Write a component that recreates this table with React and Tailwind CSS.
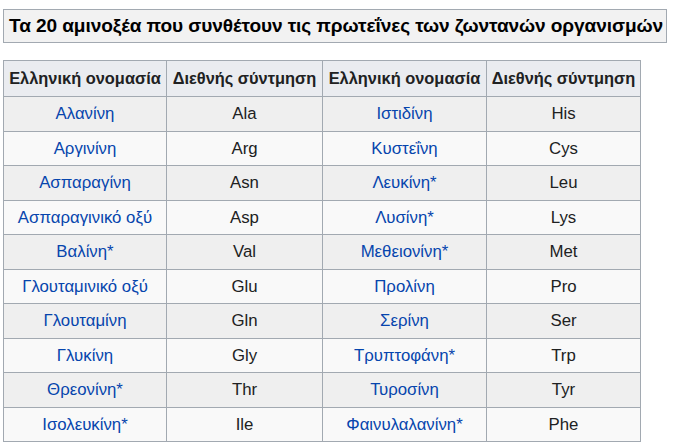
const rows = [
  ["Αλανίνη", "Ala", "Ιστιδίνη", "His"],
  ["Αργινίνη", "Arg", "Κυστεΐνη", "Cys"],
  ["Ασπαραγίνη", "Asn", "Λευκίνη*", "Leu"],
  ["Ασπαραγινικό οξύ", "Asp", "Λυσίνη*", "Lys"],
  ["Βαλίνη*", "Val", "Μεθειονίνη*", "Met"],
  ["Γλουταμινικό οξύ", "Glu", "Προλίνη", "Pro"],
  ["Γλουταμίνη", "Gln", "Σερίνη", "Ser"],
  ["Γλυκίνη", "Gly", "Τρυπτοφάνη*", "Trp"],
  ["Θρεονίνη*", "Thr", "Τυροσίνη", "Tyr"],
  ["Ισολευκίνη*", "Ile", "Φαινυλαλανίνη*", "Phe"],
];

function App() {
  return (
    <div className="bg-white w-[675px] h-[446px] px-[3px] pt-[9px] font-['Liberation_Sans',Arial,sans-serif] text-[#202122]">
      <div className="w-[664px] h-[34px] border border-[#a2a9b1] bg-[#f2f2f2] flex items-center px-[5px]">
        <span className="text-[19.1px] font-bold text-black whitespace-nowrap tracking-[-0.1px]">
          Τα 20 αμινοξέα που συνθέτουν τις πρωτεΐνες των ζωντανών οργανισμών
        </span>
      </div>
      <table className="mt-[17px] border-collapse border border-[#a2a9b1] text-[16.8px] w-[638px]">
        <thead>
          <tr className="bg-[#eaecf0] h-[36px] text-[16.4px]">
            <th className="border border-[#a2a9b1] px-[4px] font-bold w-[163px] whitespace-nowrap">Ελληνική ονομασία</th>
            <th className="border border-[#a2a9b1] px-[4px] font-bold w-[156px] whitespace-nowrap">Διεθνής σύντμηση</th>
            <th className="border border-[#a2a9b1] px-[4px] font-bold w-[164px] whitespace-nowrap">Ελληνική ονομασία</th>
            <th className="border border-[#a2a9b1] px-[4px] font-bold whitespace-nowrap">Διεθνής σύντμηση</th>
          </tr>
        </thead>
        <tbody>
          {rows.map((r, i) => (
            <tr key={i} className={i % 2 === 0 ? "bg-[#efefef] h-[34.5px]" : "bg-[#f9f9f9] h-[34.5px]"}>
              <td className="border border-[#a2a9b1] text-center text-[#0645ad] whitespace-nowrap">{r[0]}</td>
              <td className="border border-[#a2a9b1] text-center">{r[1]}</td>
              <td className="border border-[#a2a9b1] text-center text-[#0645ad] whitespace-nowrap">{r[2]}</td>
              <td className="border border-[#a2a9b1] text-center">{r[3]}</td>
            </tr>
          ))}
        </tbody>
      </table>
    </div>
  );
}

export default App;
